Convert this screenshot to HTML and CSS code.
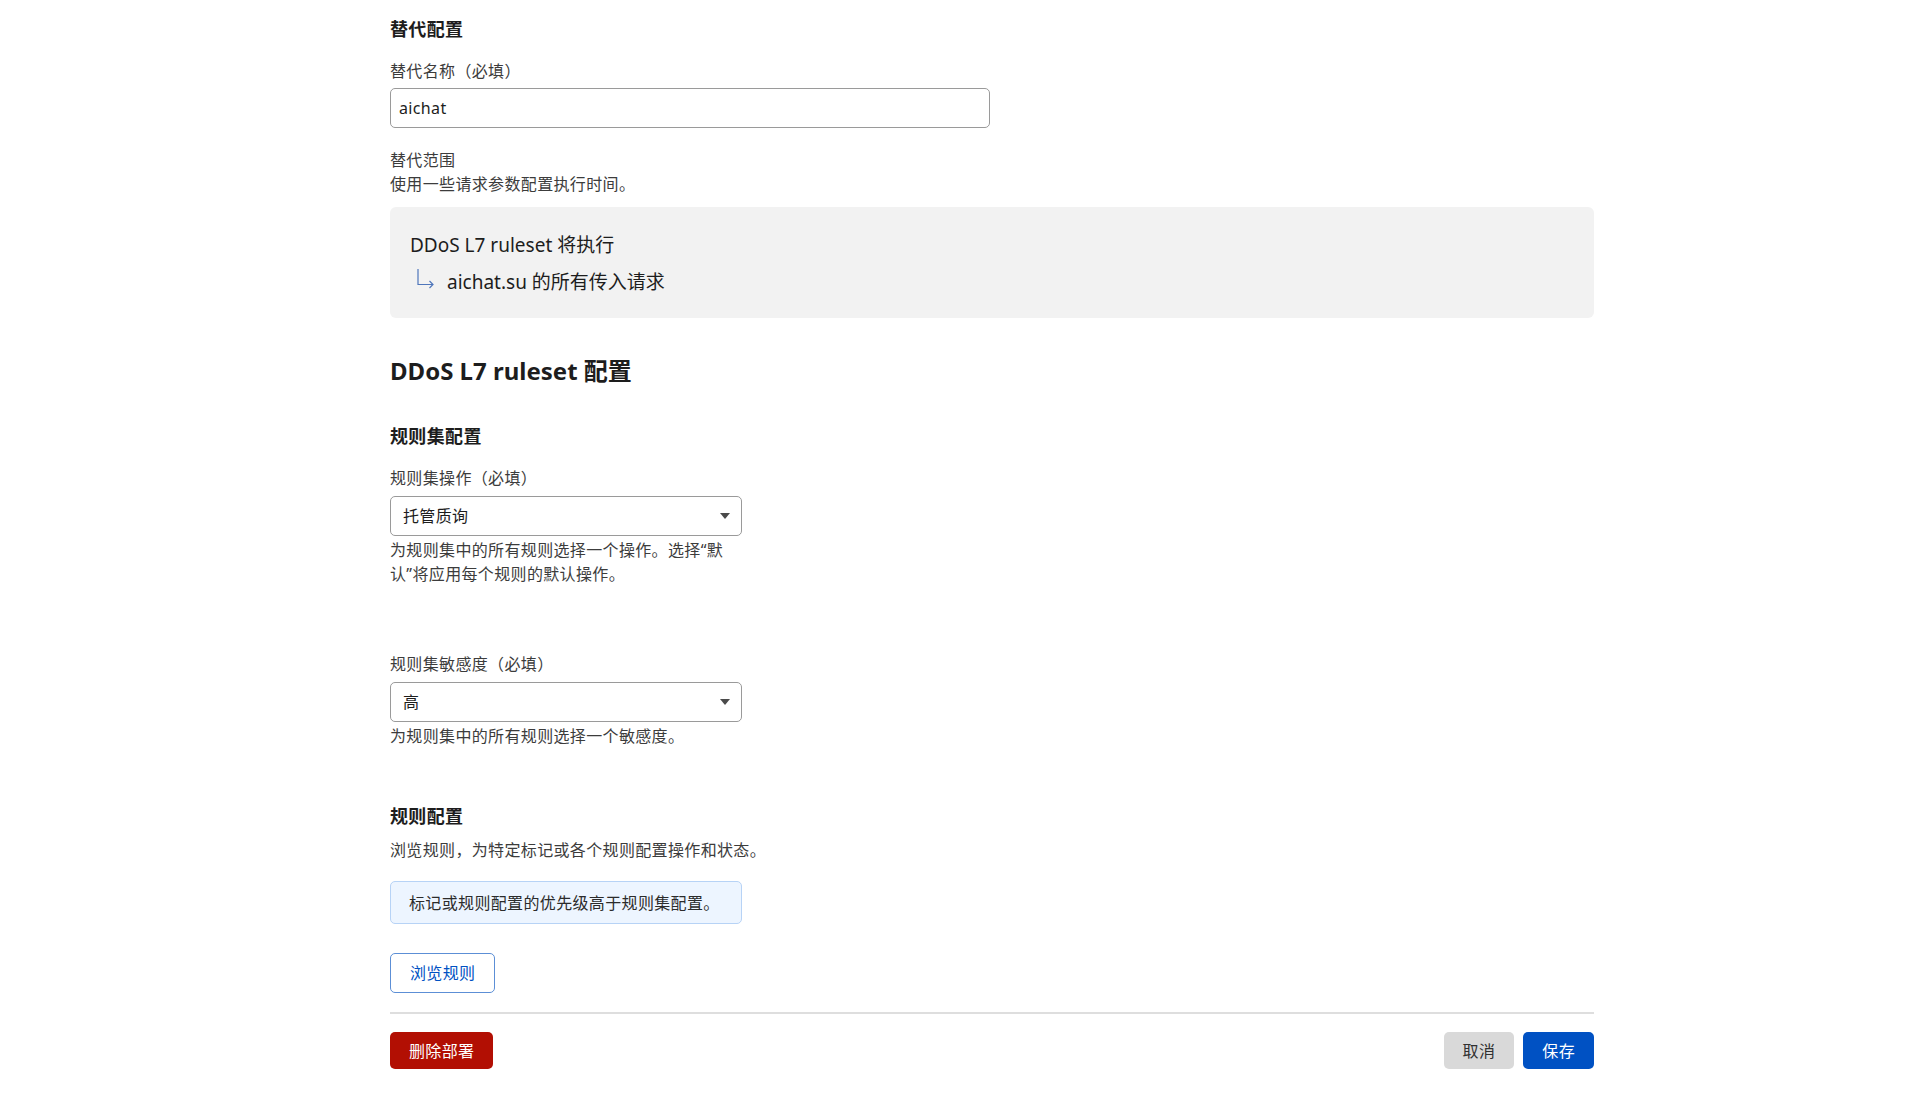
FILE: index.html
```html
<!DOCTYPE html>
<html lang="zh-CN">
<head>
  <meta charset="UTF-8" />
  <meta name="viewport" content="width=device-width, initial-scale=1.0" />
  <title>DDoS L7 ruleset 配置</title>
  <link rel="stylesheet" href="styles.css">
</head>
<body>
  <main class="page">
    <section class="override">
      <h3 class="section-title">替代配置</h3>

      <div class="field">
        <label class="field-label" for="overrideName">替代名称（必填）</label>
        <input class="text-input" id="overrideName" type="text" value="aichat">
      </div>

      <div class="field scope">
        <div class="field-label">替代范围</div>
        <p class="field-desc">使用一些请求参数配置执行时间。</p>
        <div class="scope-box">
          <div class="scope-line">DDoS L7 ruleset 将执行</div>
          <div class="scope-line scope-sub">
            <svg class="scope-arrow" width="18" height="20" viewBox="0 0 18 20" fill="none" stroke="#4f76bb" stroke-width="1.2">
              <path d="M1 0 V15.5 H16" />
              <path d="M12.5 12 L16 15.5 L12.5 19" />
            </svg>
            <span>aichat.su 的所有传入请求</span>
          </div>
        </div>
      </div>
    </section>

    <h2 class="page-title">DDoS L7 ruleset 配置</h2>

    <section class="ruleset">
      <h3 class="section-title">规则集配置</h3>

      <div class="field select-field">
        <div class="field-label">规则集操作（必填）</div>
        <div class="select">
          <span>托管质询</span>
          <svg width="10" height="6" viewBox="0 0 10 6"><path d="M0 0 H10 L5 6 Z" fill="#4a4a4a" /></svg>
        </div>
        <p class="field-help">为规则集中的所有规则选择一个操作。选择“默认”将应用每个规则的默认操作。</p>
      </div>

      <div class="field select-field sensitivity">
        <div class="field-label">规则集敏感度（必填）</div>
        <div class="select">
          <span>高</span>
          <svg width="10" height="6" viewBox="0 0 10 6"><path d="M0 0 H10 L5 6 Z" fill="#4a4a4a" /></svg>
        </div>
        <p class="field-help">为规则集中的所有规则选择一个敏感度。</p>
      </div>
    </section>

    <section class="rules">
      <h3 class="section-title">规则配置</h3>
      <p class="field-desc rules-desc">浏览规则，为特定标记或各个规则配置操作和状态。</p>
      <div class="info-box">标记或规则配置的优先级高于规则集配置。</div>
      <button class="btn btn-outline">浏览规则</button>
    </section>

    <div class="footer-bar">
      <button class="btn btn-danger">删除部署</button>
      <div class="footer-actions">
        <button class="btn btn-grey">取消</button>
        <button class="btn btn-primary">保存</button>
      </div>
    </div>
  </main>
</body>
</html>
```

FILE: styles.css
```css
:root {
  --primary-color: #0051c3;
  --danger-color: #b20f03;
  --heading-color: #1d1d1d;
  --text-color: #3c3c3c;
  --border-color: #9a9a9a;
}

* {
  margin: 0;
  padding: 0;
  box-sizing: border-box;
}

body {
  font-family: "Noto Sans", "Noto Sans CJK SC", sans-serif;
  font-size: 16px;
  line-height: 24px;
  letter-spacing: 0.35px;
  color: var(--text-color);
  background-color: white;
}

.page {
  width: 1204px;
  margin-left: 390px;
  padding-top: 17px;
}

.section-title {
  font-size: 18px;
  line-height: 24px;
  font-weight: 700;
  color: var(--heading-color);
}

.page-title {
  margin-top: 38px;
  font-size: 24px;
  line-height: 30px;
  font-weight: 700;
  letter-spacing: 0;
  color: var(--heading-color);
}

.field {
  margin-top: 18px;
}

.field-label {
  display: block;
  color: var(--text-color);
}

.text-input {
  display: block;
  width: 600px;
  height: 40px;
  margin-top: 5px;
  padding: 0 8px;
  border: 1px solid var(--border-color);
  border-radius: 5px;
  font: inherit;
  letter-spacing: inherit;
  color: var(--heading-color);
  outline: none;
}

.scope {
  margin-top: 20px;
}

.scope-box {
  margin-top: 11px;
  padding: 24px 20px 22px;
  background-color: #f2f2f2;
  border-radius: 6px;
  font-size: 19px;
  line-height: 28px;
  letter-spacing: 0;
  color: var(--heading-color);
}

.scope-sub {
  display: flex;
  align-items: center;
  gap: 12px;
  margin-top: 9px;
}

.scope-arrow {
  margin-left: 7px;
  margin-top: -6px;
}

.ruleset .section-title {
  margin-top: 38px;
}

.select-field {
  width: 352px;
}

.select {
  display: flex;
  justify-content: space-between;
  align-items: center;
  height: 40px;
  margin-top: 6px;
  padding: 0 11px 0 12px;
  border: 1px solid var(--border-color);
  border-radius: 5px;
  color: var(--heading-color);
}

.sensitivity {
  margin-top: 66px;
}

.field-help {
  margin-top: 2px;
}

.rules .section-title {
  margin-top: 56px;
}

.rules-desc {
  margin-top: 10px;
}

.info-box {
  display: flex;
  align-items: center;
  width: 352px;
  height: 43px;
  margin-top: 19px;
  padding: 0 18px;
  background-color: #edf5ff;
  border: 1px solid #b7d3f6;
  border-radius: 5px;
  color: #2b2b2b;
}

.btn {
  font: inherit;
  letter-spacing: inherit;
  padding: 0 19px;
  height: 37px;
  border: none;
  border-radius: 5px;
  cursor: pointer;
}

.btn-outline {
  display: block;
  height: 40px;
  margin-top: 29px;
  background-color: white;
  color: var(--primary-color);
  border: 1px solid #5c8fd6;
}

.footer-bar {
  display: flex;
  justify-content: space-between;
  margin-top: 19px;
  padding-top: 18px;
  border-top: 2px solid #dedede;
}

.footer-actions {
  display: flex;
  gap: 9px;
}

.btn-danger {
  background-color: var(--danger-color);
  color: white;
}

.btn-grey {
  background-color: #d9d9d9;
  color: #313131;
}

.btn-primary {
  background-color: var(--primary-color);
  color: white;
}
```
